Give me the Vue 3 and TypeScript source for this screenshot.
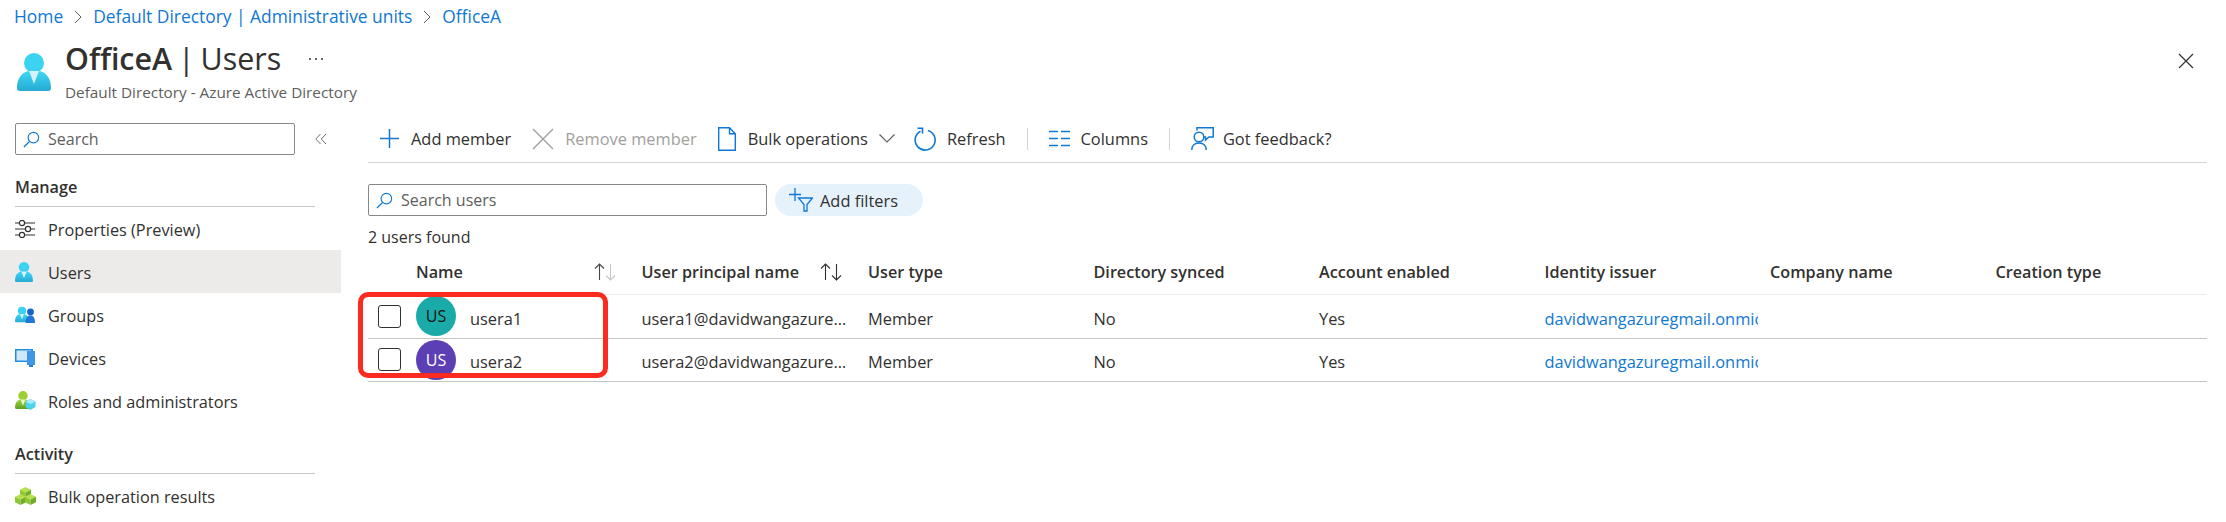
<script setup lang="ts">
const columns = ['User type', 'Directory synced', 'Account enabled', 'Identity issuer', 'Company name', 'Creation type'];

const users = [
  { name: 'usera1', upn: 'usera1@davidwangazuregmail.onmicrosoft.com', color: '#1aaba8', initials: '#111' },
  { name: 'usera2', upn: 'usera2@davidwangazuregmail.onmicrosoft.com', color: '#5c3fb5', initials: '#fff' },
];
</script>

<template>
  <div class="page">
    <svg class="defs" width="0" height="0">
      <defs>
        <linearGradient id="blue" x1="0" y1="0" x2="0" y2="1">
          <stop offset="0" stop-color="#3fd8f6" />
          <stop offset="1" stop-color="#27a9d2" />
        </linearGradient>
        <linearGradient id="green" x1="0" y1="0" x2="0" y2="1">
          <stop offset="0" stop-color="#a4d63c" />
          <stop offset="1" stop-color="#5e9e22" />
        </linearGradient>
        <symbol id="person" viewBox="0 0 34 38">
          <circle cx="17" cy="10" r="10" fill="#3cd3f2" />
          <path d="M0 35c0-9 4-15 11-17l6 2 6-2c7 2 11 8 11 17 0 2-1 3-3 3H3c-2 0-3-1-3-3z" fill="url(#blue)" />
          <path d="M12 18h10l-5 13z" fill="#d3f2fa" />
        </symbol>
        <symbol id="person-green" viewBox="0 0 34 38">
          <circle cx="17" cy="10" r="10" fill="#9ccf34" />
          <path d="M0 35c0-9 4-15 11-17l6 2 6-2c7 2 11 8 11 17 0 2-1 3-3 3H3c-2 0-3-1-3-3z" fill="url(#green)" />
          <path d="M12 18h10l-5 13z" fill="#eaf5cf" />
        </symbol>
        <symbol id="cube" viewBox="0 0 12 12">
          <path d="M6 0l6 3-6 3-6-3z" fill="#b7e04e" />
          <path d="M0 3l6 3v6l-6-3z" fill="#8fc832" />
          <path d="M12 3L6 6v6l6-3z" fill="#6fae26" />
        </symbol>
        <symbol id="glass" viewBox="0 0 18 18">
          <circle cx="11" cy="7" r="5.6" fill="none" stroke="#0f78d4" stroke-width="1.2" />
          <path d="M7 11l-6 6" stroke="#0f78d4" stroke-width="1.4" fill="none" />
        </symbol>
      </defs>
    </svg>

    <nav class="crumbs">
      <a>Home</a>
      <svg class="crumb-sep" viewBox="0 0 8 14"><path d="M1 1l6 6-6 6" /></svg>
      <a>Default Directory | Administrative units</a>
      <svg class="crumb-sep" viewBox="0 0 8 14"><path d="M1 1l6 6-6 6" /></svg>
      <a>OfficeA</a>
    </nav>

    <header class="head">
      <svg class="head-icon"><use href="#person" /></svg>
      <div class="head-text">
        <div class="title-row">
          <h1><b>OfficeA</b> | Users</h1>
          <span class="more">
            <i></i><i></i><i></i>
          </span>
        </div>
        <p>Default Directory - Azure Active Directory</p>
      </div>
      <svg class="close" viewBox="0 0 16 16"><path d="M1 1l14 14M15 1L1 15" /></svg>
    </header>

    <div class="body">
      <aside class="side">
        <div class="side-top">
          <div class="search side-search">
            <svg class="glass"><use href="#glass" /></svg>
            <span>Search</span>
          </div>
          <svg class="collapse" viewBox="0 0 12 12">
            <path d="M5.500 1L.8 6l4.700 5M11 1L6.300 6 11 11" />
          </svg>
        </div>

        <h2 class="section first">Manage</h2>
        <a class="item">
          <span class="item-icon">
            <svg width="20" height="18" viewBox="0 0 20 18" fill="none" stroke="#323130" stroke-width="1.200">
              <path d="M0 3h4M10 3h10M0 9h10M16 9h4M0 15h4M10 15h10" />
              <circle cx="7" cy="3" r="2.600" /><circle cx="13" cy="9" r="2.600" /><circle cx="7" cy="15" r="2.600" />
            </svg>
          </span>
          <span class="label">Properties (Preview)</span>
        </a>
        <a class="item active">
          <span class="item-icon">
            <svg width="18" height="20"><use href="#person" /></svg>
          </span>
          <span class="label">Users</span>
        </a>
        <a class="item">
          <span class="item-icon">
            <svg width="20" height="18" viewBox="0 0 20 18">
              <use href="#person" x="0" y="0" width="14" height="17" />
              <circle cx="15.500" cy="6" r="3.400" fill="#1565c8" />
              <path d="M10.500 17c0-5 2-7.500 5-7.500s4.500 2.500 4.500 7.500z" fill="#1f77d8" />
            </svg>
          </span>
          <span class="label">Groups</span>
        </a>
        <a class="item">
          <span class="item-icon">
            <svg width="20" height="18" viewBox="0 0 20 18">
              <rect x="0" y="0" width="18" height="13" fill="#1f8fdc" />
              <rect x="1.500" y="1.500" width="15" height="10" fill="#cfe9fa" />
              <rect x="12" y="2" width="8" height="14" fill="#3f96e4" />
              <path d="M14 16h4v2h-4z" fill="#2a7fd0" />
            </svg>
          </span>
          <span class="label">Devices</span>
        </a>
        <a class="item">
          <span class="item-icon">
            <svg width="21" height="19" viewBox="0 0 21 19">
              <use href="#person-green" x="0" y="0" width="16" height="18" />
              <path d="M15.500 8l5 2.500v5.500l-5 3-5-3v-5.500z" fill="#4fd2ee" />
              <path d="M15.500 8l5 2.500-5 2.500-5-2.500z" fill="#a6ecfa" />
            </svg>
          </span>
          <span class="label">Roles and administrators</span>
        </a>

        <h2 class="section second">Activity</h2>
        <a class="item">
          <span class="item-icon">
            <svg width="21" height="18" viewBox="0 0 21 18">
              <use href="#cube" x="5" y="0" width="11" height="11" />
              <use href="#cube" x="0" y="7" width="11" height="11" />
              <use href="#cube" x="10" y="7" width="11" height="11" />
            </svg>
          </span>
          <span class="label">Bulk operation results</span>
        </a>
      </aside>

      <main class="main">
        <div class="toolbar">
          <button class="tool add">
            <svg width="19" height="19" viewBox="0 0 19 19" fill="none" stroke="#0f78d4" stroke-width="1.500">
              <path d="M9.500 0v19M0 9.500h19" />
            </svg>
            Add member
          </button>
          <button class="tool remove">
            <svg width="22" height="22" viewBox="0 0 22 22" fill="none" stroke="#a19f9d" stroke-width="1.400">
              <path d="M1 1l20 20M21 1L1 21" />
            </svg>
            Remove member
          </button>
          <button class="tool bulk">
            <svg width="18" height="24" viewBox="0 0 18 24" fill="none" stroke="#0f78d4" stroke-width="1.400">
              <path d="M.7.700h10.800l5.800 6v16.600H.7zM11.500.700v6h5.800" />
            </svg>
            Bulk operations
            <svg class="chev" width="16" height="9" viewBox="0 0 16 9" fill="none" stroke="#605e5c" stroke-width="1.100">
              <path d="M.5.500L8 8 15.500.5" />
            </svg>
          </button>
          <button class="tool refresh">
            <svg width="22" height="24" viewBox="0 0 22 24" fill="none" stroke="#0f78d4" stroke-width="1.600">
              <path d="M14 3.500A10 10 0 1 1 6.500 4.200" />
              <path d="M3.500 1.300h5v5.200" />
            </svg>
            Refresh
          </button>
          <span class="sep"></span>
          <button class="tool cols">
            <svg width="21" height="17" viewBox="0 0 21 17" stroke="#0f78d4" stroke-width="1.500">
              <path d="M0 1.500h9M12 1.500h9M0 8.500h9M12 8.500h9M0 15.500h9M12 15.500h9" />
            </svg>
            Columns
          </button>
          <span class="sep"></span>
          <button class="tool feedback">
            <svg width="23" height="23" viewBox="0 0 23 23" fill="none" stroke="#0f78d4" stroke-width="1.500">
              <path d="M6 3.500V.8h16.200V10H18l-3.500 3v-3H13" />
              <circle cx="8" cy="10" r="4.800" />
              <path d="M.8 23c0-4.500 3-7 7.200-7s7.200 2.500 7.200 7" />
            </svg>
            Got feedback?
          </button>
        </div>

        <div class="filters">
          <div class="search main-search">
            <svg class="glass"><use href="#glass" /></svg>
            <span>Search users</span>
          </div>
          <button class="pill">
            <svg width="24" height="24" viewBox="0 0 24 24" fill="none" stroke="#0f78d4" stroke-width="1.300">
              <path d="M6 0v13M0 6.500h12" />
              <path d="M9.500 10h14l-5.500 6.500V23h-3v-6.500z" />
            </svg>
            Add filters
          </button>
        </div>
        <p class="count">2 users found</p>

        <div class="table">
          <div class="row head-row">
            <span></span>
            <span class="th sortable">
              Name
              <svg class="sort" viewBox="0 0 22 18" fill="none" stroke-width="1.100">
                <path d="M5.500 17V1M1 5.500l4.500-4.500 4.500 4.500" stroke="#484644" />
                <path d="M16.500 1v16M12 12.500l4.500 4.500 4.500-4.500" stroke="#c8c6c4" />
              </svg>
            </span>
            <span class="th sortable">
              User principal name
              <svg class="sort" viewBox="0 0 22 18" fill="none" stroke="#323130" stroke-width="1.100">
                <path d="M5.500 17V1M1 5.500l4.500-4.500 4.500 4.500" />
                <path d="M16.500 1v16M12 12.500l4.500 4.500 4.500-4.500" />
              </svg>
            </span>
            <span v-for="c in columns" :key="c" class="th">{{ c }}</span>
          </div>

          <div v-for="u in users" :key="u.name" class="row user-row">
            <span class="check"></span>
            <span class="name-cell">
              <span class="avatar" :style="{ background: u.color, color: u.initials }">US</span>
              <span class="cell">{{ u.name }}</span>
            </span>
            <span class="cell upn">{{ u.upn }}</span>
            <span class="cell">Member</span>
            <span class="cell">No</span>
            <span class="cell">Yes</span>
            <a class="cell issuer">davidwangazuregmail.onmicrosoft.com</a>
            <span></span>
            <span></span>
          </div>

          <div class="callout"></div>
        </div>
      </main>
    </div>
  </div>
</template>

<style>
html,
body {
  margin: 0;
  background: #fff;
}
</style>

<style scoped>
.page {
  width: 2226px;
  height: 522px;
  overflow: hidden;
  background: #fff;
  color: #323130;
  font-family: 'Open Sans', 'Noto Sans', sans-serif;
  font-size: 16.400px;
}

.defs {
  position: absolute;
}

.crumbs {
  height: 32px;
  padding-left: 14px;
  display: flex;
  align-items: center;
  font-size: 17.400px;
  color: #0f78d4;
}

.crumb-sep {
  width: 8px;
  height: 14px;
  margin: 2px 11px 0;
  fill: none;
  stroke: #605e5c;
  stroke-width: 1;
}

.head {
  height: 91px;
  display: flex;
  align-items: flex-start;
  padding-left: 17px;
}

.head-icon {
  width: 34px;
  height: 38px;
  margin-top: 21px;
}

.head-text {
  margin-left: 14px;
}

.title-row {
  display: flex;
  align-items: center;
  margin-top: 7px;
}

.head h1 {
  margin: 0;
  font-size: 30.400px;
  line-height: 40px;
  font-weight: 400;
  word-spacing: -2px;
}

.head h1 b {
  font-weight: 600;
}

.head p {
  margin: 3px 0 0;
  font-size: 15.300px;
  line-height: 20px;
  color: #605e5c;
}

.more {
  display: flex;
  gap: 4px;
  margin-left: 28px;
}

.more i {
  width: 2px;
  height: 2px;
  background: #323130;
  border-radius: 50%;
}

.close {
  width: 16px;
  height: 16px;
  margin: 21px 32px 0 auto;
  fill: none;
  stroke: #323130;
  stroke-width: 1.200;
}

.body {
  display: flex;
}

.side {
  width: 341px;
  flex: none;
}

.side-top {
  display: flex;
  align-items: center;
  padding-left: 15px;
}

.search {
  height: 32px;
  box-sizing: border-box;
  border: 1px solid #8a8886;
  border-radius: 2px;
  display: flex;
  align-items: center;
  padding-left: 7px;
  font-size: 16px;
  color: #605e5c;
}

.side-search {
  width: 280px;
}

.glass {
  width: 17px;
  height: 17px;
  margin-right: 8px;
}

.collapse {
  width: 12px;
  height: 12px;
  margin-left: 20px;
  fill: none;
  stroke: #605e5c;
  stroke-width: 0.900;
}

.section {
  margin: 0 26px 0 15px;
  font-size: 16.200px;
  font-weight: 600;
  border-bottom: 1px solid #c8c6c4;
  line-height: 21px;
}

.first {
  padding: 22px 0 8px;
}

.second {
  padding: 22px 0 8px;
}

.item {
  height: 43px;
  display: flex;
  align-items: center;
  padding-left: 15px;
  font-size: 16.300px;
}

.label {
  padding-top: 3px;
}

.active {
  background: #edebe9;
}

.item-icon {
  width: 33px;
  display: flex;
  flex: none;
}

.main {
  flex: 1;
  padding: 0 19px 0 27px;
  min-width: 0;
}

.toolbar {
  padding-bottom: 7px;
  height: 32px;
  display: flex;
  align-items: center;
  border-bottom: 1px solid #d6d4d2;
  padding-left: 12px;
}

.tool {
  border: 0;
  background: none;
  padding: 0 0 1px;
  font: inherit;
  color: #323130;
  display: flex;
  align-items: center;
  gap: 12px;
  margin-right: 21px;
  white-space: nowrap;
}

.remove {
  color: #a19f9d;
  gap: 11px;
}

.bulk {
  margin-right: 19px;
}

.refresh,
.cols {
  gap: 11px;
}

.feedback {
  gap: 9px;
}

.chev {
  margin-left: -1px;
}

.sep {
  width: 1px;
  height: 22px;
  background: #d6d4d2;
  margin-right: 21px;
}

.filters {
  display: flex;
  align-items: center;
  gap: 8px;
  margin-top: 21px;
}

.main-search {
  width: 399px;
}

.pill {
  width: 148px;
  height: 32px;
  box-sizing: border-box;
  border: 0;
  border-radius: 16px;
  background: #e5f1fb;
  font: inherit;
  color: #323130;
  display: flex;
  align-items: center;
  gap: 7px;
  padding-left: 14px;
}

.count {
  margin: 10px 0 0;
  font-size: 16px;
  line-height: 22px;
}

.table {
  position: relative;
}

.row {
  display: grid;
  grid-template-columns: 48px 225.500px 226.500px repeat(5, 225.500px) 1fr;
  align-items: center;
}

.head-row {
  height: 44px;
  padding-top: 2px;
  border-bottom: 1px solid #edebe9;
}

.th {
  font-size: 16.200px;
  font-weight: 600;
  display: flex;
  align-items: center;
  justify-content: space-between;
  white-space: nowrap;
}

.sortable {
  padding-right: 26px;
}

.sort {
  width: 22px;
  height: 18px;
}

.user-row {
  height: 43.500px;
  box-sizing: border-box;
  border-bottom: 1px solid #c8c6c4;
}

.check {
  width: 23px;
  height: 23px;
  box-sizing: border-box;
  border: 1px solid #323130;
  border-radius: 3px;
  margin-left: 10px;
}

.name-cell {
  display: flex;
  align-items: center;
  gap: 14px;
}

.cell {
  padding-top: 4px;
}

.avatar {
  width: 40px;
  height: 40px;
  border-radius: 50%;
  display: flex;
  align-items: center;
  justify-content: center;
  font-size: 16px;
}

.upn {
  width: 207px;
  overflow: hidden;
  text-overflow: ellipsis;
  white-space: nowrap;
}

.issuer {
  width: 213px;
  overflow: hidden;
  white-space: nowrap;
  color: #0f78d4;
}

.callout {
  position: absolute;
  left: -10px;
  top: 44px;
  width: 250px;
  height: 86px;
  box-sizing: border-box;
  border: 5px solid #fb2c1f;
  border-radius: 10px;
}
</style>
